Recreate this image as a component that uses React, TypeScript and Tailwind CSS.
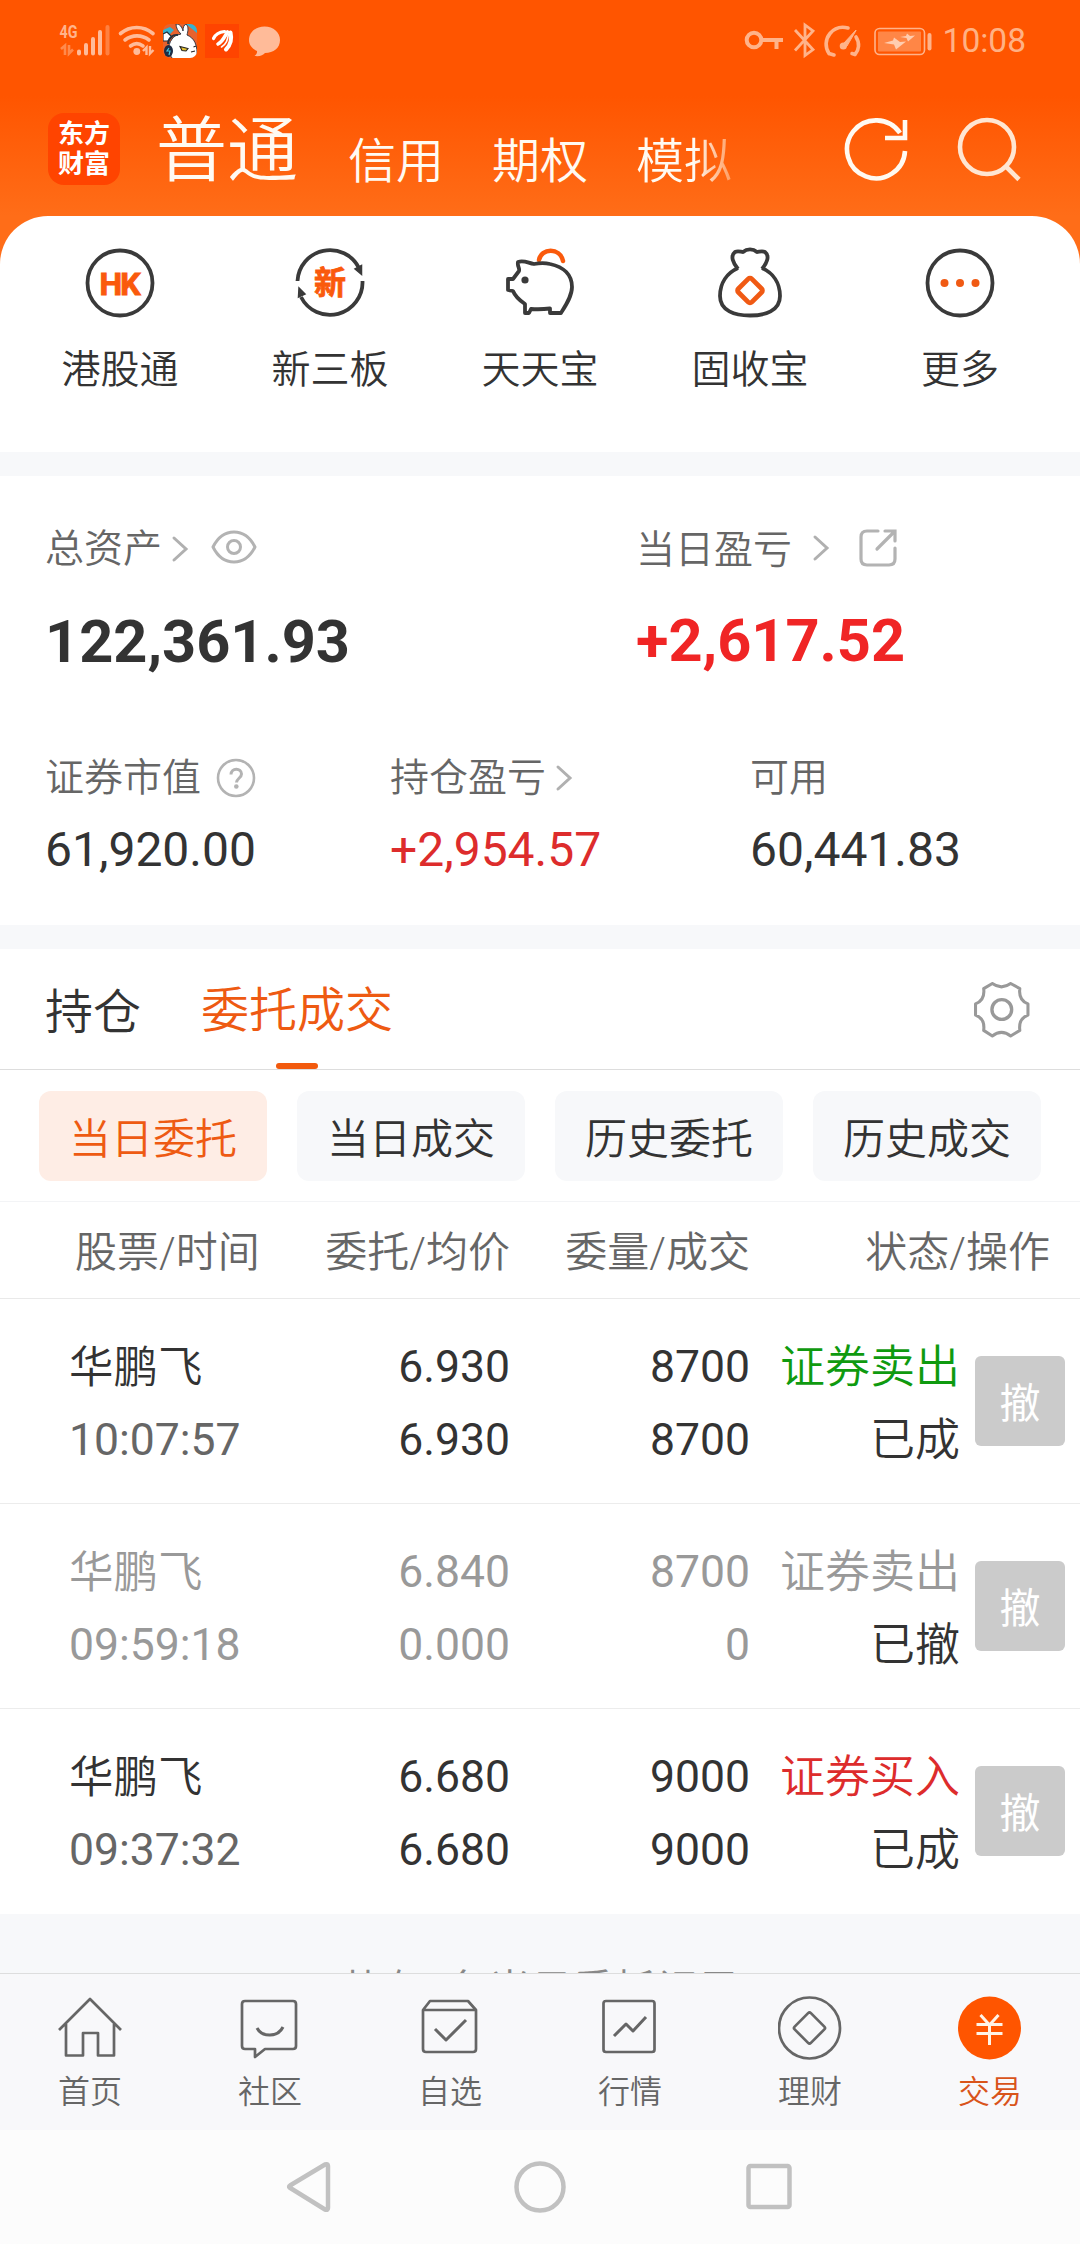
import React, { useState } from 'react';

interface Order {
  name: string;
  time: string;
  price: string;
  avgPrice: string;
  amount: string;
  filled: string;
  side: string;
  sideColor: string;
  status: string;
  cancelled?: boolean;
}

const orders: Order[] = [
  {
    name: '华鹏飞',
    time: '10:07:57',
    price: '6.930',
    avgPrice: '6.930',
    amount: '8700',
    filled: '8700',
    side: '证券卖出',
    sideColor: 'text-[#0f9a0f]',
    status: '已成',
  },
  {
    name: '华鹏飞',
    time: '09:59:18',
    price: '6.840',
    avgPrice: '0.000',
    amount: '8700',
    filled: '0',
    side: '证券卖出',
    sideColor: 'text-[#999999]',
    status: '已撤',
    cancelled: true,
  },
  {
    name: '华鹏飞',
    time: '09:37:32',
    price: '6.680',
    avgPrice: '6.680',
    amount: '9000',
    filled: '9000',
    side: '证券买入',
    sideColor: 'text-[#dd2c2c]',
    status: '已成',
  },
];

const filters = ['当日委托', '当日成交', '历史委托', '历史成交'];

const StatusBar = () => (
  <div className="flex h-[82px] items-center justify-between pl-[56px] pr-[54px]">
    {/* Signal, wifi and notification icons */}
    <svg width="230" height="40" viewBox="56 21 230 40" fill="none">
      <text x="59.5" y="38" fontSize="18" fontWeight="700" fill="#ffb48c" textLength="18" lengthAdjust="spacingAndGlyphs">
        4G
      </text>
      <g stroke="#ff8a4d" strokeWidth="2.6">
        <path d="M61 49l4-3.5V55M73 49.500l-4 4V45" />
      </g>
      <g stroke="#ffbb99" strokeWidth="4" strokeLinecap="round">
        <path d="M79 51.500v2M86 45v8.500M93 39v14.500M100 32v21.500" />
        <path d="M107.500 27v26.500" stroke="#ff8040" />
      </g>
      <g stroke="#ffbb99" strokeWidth="3.6" strokeLinecap="round">
        <path d="M120.500 33.500c9.500-8 23-8 32.500 0M125 40c7-5.500 17-5.500 24 0M130.500 46c4-3 8.500-3 12.500 0" />
      </g>
      <circle cx="136.800" cy="51.500" r="3.400" fill="#ffbb99" />
      <path d="M143 51l3.500-3.500V55M153.500 50l-3.500 3.500V46" stroke="#ffbb99" strokeWidth="2.400" />

      {/* Rabbit with headphones */}
      <clipPath id="rabbit">
        <rect x="163" y="24" width="34" height="34" rx="7" />
      </clipPath>
      <g clipPath="url(#rabbit)">
        <rect x="163" y="24" width="34" height="34" fill="#e8622e" />
        <path d="M163 30l7-3 4 3-6 6h-5zM186 24h11v9z" fill="#35b3cf" />
        <path d="M163 34l4-2 5 5-4 4h-5z" fill="#fff" stroke="#26303c" strokeWidth="1.200" />
        <path
          d="M181 34c-3-3-5-6-5-10 4 0 6 3 7 7 0-4 1-6 3-7 3 3 2 7 1 11 7 3 11 9 10 24h-24c-5-5-6-13-1-20 2-3 5-4 9-5z"
          fill="#fff"
          stroke="#26303c"
          strokeWidth="0.900"
        />
        <path d="M168 44c0-6 5-10 10-9" stroke="#26303c" strokeWidth="1.800" />
        <ellipse cx="168.500" cy="51" rx="4.500" ry="6" fill="#1d2c44" />
        <path d="M169 48l-2 3h3l-1 4" stroke="#45c3dd" strokeWidth="1.200" />
        <path d="M180 46.500l8 2-2 2.500-4-.5z" fill="#e2c02f" stroke="#222" strokeWidth="1.100" />
        <path d="M193.500 47l2.500-1M191 52l4-1" stroke="#222" strokeWidth="1.200" />
      </g>

      <rect x="205" y="24" width="34" height="34" fill="#ff4400" />
      {/* Three feathers of the broker logo */}
      <g stroke="#fff" strokeLinecap="round">
        <path d="M213.500 38.500c2-4.500 6-6.500 11-7" strokeWidth="3.200" />
        <path d="M218 44c5-2.500 6.500-7.500 9.500-12" strokeWidth="3.600" />
        <path d="M226 49.500c5-5 6-11 4.500-17" strokeWidth="4" />
        <path d="M221.500 47c5-3 6-7 7-13" strokeWidth="1.600" />
      </g>
      <path
        d="M264.500 26.500c9 0 15.500 6 15.500 13.500 0 8-6.500 13-15 13-2 2.500-5 3.500-10.500 3 2-1.500 2.800-3.500 2.500-5-5-2.500-8-6-8-11 0-7.500 6.500-13.500 15.500-13.500z"
        fill="#ffbb99"
      />
    </svg>

    <div className="flex items-center gap-[9px]">
      <svg width="190" height="40" viewBox="744 21 190 40" fill="none" stroke="#ffb38a">
        <g strokeWidth="4">
          <circle cx="754" cy="40" r="7.300" />
          <path d="M762 40h21M776.500 40v9" />
        </g>
        <path d="M795 30l18 19.500-8 6V25l8 6-18 19.500" strokeWidth="2.800" />
        <g strokeWidth="3.600" strokeLinecap="round">
          <path d="M829 53.500c-4-6-4-14 1-20 5-6 12-7 18-5.500M856 37c4 6 3 13-1 17.500M829 53.500l5 1.500M855 54.500l-3-1" />
        </g>
        <path d="M856 30l-12 13-1 5 4-2 9-15.500z" fill="#ffb38a" strokeWidth="1" />
        <circle cx="843.300" cy="46" r="3.600" fill="#ffb38a" stroke="none" />
        <rect x="875" y="28.500" width="49.500" height="26" rx="4.500" strokeWidth="1.600" />
        <rect x="878" y="31.500" width="43" height="20" rx="1" fill="#ff8646" stroke="none" />
        <path d="M884 43l9-2.500 1-3 6 4.500 6-.5-10 8-2-5zM900 37l6-1 1-2.500 3 2.500 5-.5-7 6-1.500-3.500z" fill="#ffcdb0" stroke="none" />
        <path d="M929.500 35v13.500" strokeWidth="4" strokeLinecap="round" />
      </svg>
      <span className="text-[33.5px] leading-10 text-[#ffb184]">10:08</span>
    </div>
  </div>
);

const HeaderTabs = () => (
  <div className="flex h-[134px] items-center pl-12 pr-[58px] text-[#fffaf2]">
    <div className="flex size-[72px] flex-col items-center justify-center rounded-2xl bg-[#ff4400] text-[26px] leading-[30px] font-bold text-white">
      <span>东方</span>
      <span>财富</span>
    </div>
    <div className="ml-[36px] flex flex-1 items-center gap-12 text-[48px] leading-[72px] font-[350]">
      <span className="pt-1 pr-[2px] text-[71px]">普通</span>
      <span className="pt-[26px]">信用</span>
      <span className="pt-[26px]">期权</span>
      <span className="bg-linear-to-r from-[#fffaf2] from-60% to-[#ff9a5c] bg-clip-text pt-[26px] text-transparent">模拟</span>
    </div>
    <svg width="64" height="64" viewBox="0 0 64 64" fill="none" stroke="currentColor" strokeWidth="4.600" className="mr-[48px]">
      <path d="M61 34A29 29 0 1 1 56 16M61 3v18H41" />
    </svg>
    <svg width="66" height="66" viewBox="0 0 66 66" fill="none" stroke="#ffe6d2" strokeWidth="4.600">
      <circle cx="31" cy="31" r="27" />
      <path d="M49.500 50L63 63.500" />
    </svg>
  </div>
);

const shortcuts = [
  {
    label: '港股通',
    icon: (
      <>
        <circle cx="36" cy="36" r="32.500" />
        <text x="36" y="47.500" fontSize="32" fontWeight="700" fill="#fa5a0c" stroke="#fa5a0c" strokeWidth="1" textAnchor="middle" textLength="41">
          HK
        </text>
      </>
    ),
  },
  {
    label: '新三板',
    icon: (
      <>
        <path d="M3.500 34A32.500 32.500 0 0 1 65 21M68.500 34A32.500 32.500 0 0 1 7 50" />
        <path d="M61 22l6.500-3.500v9zM4.500 50l.5-9 6 6z" fill="#3a3a3a" strokeWidth="1.500" />
        <text x="36" y="46.500" fontSize="32" fontWeight="700" fill="#fa5a0c" stroke="#fa5a0c" strokeWidth="0.800" textAnchor="middle">
          新
        </text>
      </>
    ),
  },
  {
    label: '天天宝',
    icon: (
      <>
        <path d="M35 13c2-12 21-13 24 1" stroke="#fa5a0c" strokeWidth="4.500" strokeLinecap="round" />
        <path
          d="M14 15c6-2 10 1 16 2 5-1 10-1.500 16 0 14 3 22 11 22 23 0 9-6 18-11 26H46v-4.500c-8 1-12 1-19 .5l-2 4H21v-9C15 53 11 49 9 44l-5-1V32h5l6-8c1-3-2-5-1-9z"
          strokeLinejoin="round"
        />
        <circle cx="21" cy="33" r="3.600" fill="#3a3a3a" stroke="none" />
      </>
    ),
  },
  {
    label: '固收宝',
    icon: (
      <>
        <path
          d="M24 22c-5-6-8-13-3-17 3-1.500 6 0 8 0 4-3.500 10-3.500 14 0 2 0 5-1.500 8 0 5 4 2 11-3 17M24 21C13 26 6 36 6 49c0 15 15 19.500 30 19.500S66 64 66 49C66 36 59 26 48 21"
          strokeLinejoin="round"
        />
        <rect x="26.500" y="34" width="19" height="19" rx="2.500" transform="rotate(45 36 43.500)" stroke="#f05a14" strokeWidth="4.800" />
      </>
    ),
  },
  {
    label: '更多',
    icon: (
      <>
        <circle cx="36" cy="36" r="32.500" />
        <g fill="#f05a14" stroke="none">
          <circle cx="20.500" cy="36" r="4" />
          <circle cx="36" cy="36" r="4" />
          <circle cx="51.500" cy="36" r="4" />
        </g>
      </>
    ),
  },
];

const Chevron = ({ className = '' }: { className?: string }) => (
  <svg width="18" height="28" viewBox="0 0 18 28" fill="none" stroke="#b0b0b0" strokeWidth="3" strokeLinecap="round" className={className}>
    <path d="M3 3l12 11L3 25" />
  </svg>
);

const AssetSummary = () => (
  <section className="h-[449px] bg-white pt-[44px] text-[39px] leading-[56px] font-[350] text-[#666666]">
    <div className="flex">
      <div className="w-[636px] pl-[45px]">
        <div className="flex items-center">
          <span className="pt-px">总资产</span>
          <Chevron className="ml-[9px] mt-[1px]" />
          <svg width="46" height="34" viewBox="0 0 46 34" fill="none" stroke="#b3b3b3" strokeWidth="3" className="mb-[4px] ml-[22px]">
            <path d="M2 17C12-3 34-3 44 17 34 37 12 37 2 17z" strokeLinejoin="round" />
            <circle cx="23" cy="17" r="6.500" />
          </svg>
        </div>
        <div className="mt-[29px] text-[59.5px] leading-[72px] font-bold text-[#333333]">122,361.93</div>
      </div>
      <div>
        <div className="flex items-center">
          <span className="pt-[2px]">当日盈亏</span>
          <Chevron className="mb-[2px] ml-[20px]" />
          <svg width="40" height="40" viewBox="0 0 40 40" fill="none" stroke="#b3b3b3" strokeWidth="3.200" strokeLinecap="round" className="mb-[2px] ml-[28px]">
            <path d="M20 3H9Q3 3 3 9v22q0 6 6 6h22q6 0 6-6V20M19 21L36 4M27 3h10v10" />
          </svg>
        </div>
        <div className="mt-[27px] text-[59.5px] leading-[72px] font-bold text-[#f02525]">+2,617.52</div>
      </div>
    </div>

    <div className="mt-[71px] flex">
      <div className="w-[390px] pl-[45px]">
        <div className="flex items-center">
          <span className="pt-px">证券市值</span>
          <svg width="40" height="40" viewBox="0 0 40 40" fill="none" stroke="#b3b3b3" strokeWidth="2.600" className="ml-[15px]">
            <circle cx="20" cy="20" r="18" />
            <path d="M15 16.500c0-7 10.500-7 10.500-.5 0 4-5 4.500-5 8.500" strokeWidth="3" />
            <circle cx="20.300" cy="28.500" r="2.300" fill="#b3b3b3" stroke="none" />
          </svg>
        </div>
        <div className="mt-[16px] text-[48px] font-normal text-[#333333]">61,920.00</div>
      </div>
      <div className="w-[360px]">
        <div className="flex items-center">
          <span className="pt-px">持仓盈亏</span>
          <Chevron className="ml-[9px]" />
        </div>
        <div className="mt-[16px] text-[48px] font-normal text-[#dd2c2c]">+2,954.57</div>
      </div>
      <div>
        <div className="pt-px">可用</div>
        <div className="mt-[16px] text-[48px] font-normal text-[#333333]">60,441.83</div>
      </div>
    </div>
  </section>
);

const OrderRow: React.FC<{ order: Order; last: boolean }> = ({ order, last }) => (
  <div
    className={`grid h-[205px] grid-cols-[300px_210px_240px_210px_120px] items-center border-b text-[44.5px] leading-[73px] font-[350] ${last ? 'border-white' : 'border-[#ececec]'} ${order.cancelled ? 'text-[#999999]' : 'text-[#333333]'}`}
  >
    <div className="pt-1.5 pl-[69px]">
      <div className="pt-[2px] leading-[71px]">{order.name}</div>
      <div className={`font-normal ${order.cancelled ? 'text-[#999999]' : 'text-[#666666]'}`}>{order.time}</div>
    </div>
    <div className="pt-1.5 text-right font-normal">
      <div>{order.price}</div>
      <div>{order.avgPrice}</div>
    </div>
    <div className="pt-1.5 text-right font-normal">
      <div>{order.amount}</div>
      <div>{order.filled}</div>
    </div>
    <div className="pt-1.5 text-right text-[45px]">
      <div className={order.sideColor}>{order.side}</div>
      <div className="text-[#333333]">{order.status}</div>
    </div>
    <button className="mx-auto flex size-[90px] items-center justify-center rounded-md bg-[#cbcbcb] pt-[6px] text-[41px] font-normal text-white">
      撤
    </button>
  </div>
);

const navItems = [
  {
    label: '首页',
    icon: <path d="M1 34L32 3l31 31M8 28v31.500h17V37h15v22.500h16V28" />,
  },
  {
    label: '社区',
    icon: (
      <>
        <path d="M7 5h48q3 0 3 3v42q0 3-3 3H27l-10 8v-8H7q-3 0-3-3V8q0-3 3-3z" />
        <path d="M19 32c5 9.500 21 9.500 26-1" strokeWidth="3" />
      </>
    ),
  },
  {
    label: '自选',
    icon: (
      <>
        <path d="M5 14l7-9h38l8 9v39q0 3-3 3H8q-3 0-3-3zM5 14h53" />
        <path d="M17 33l11 11 20-20" strokeWidth="3" />
      </>
    ),
  },
  {
    label: '行情',
    icon: (
      <>
        <rect x="5.500" y="5" width="51" height="51" rx="2.500" />
        <path d="M16 40l12-12 7 7 13-14" strokeWidth="3" />
      </>
    ),
  },
  {
    label: '理财',
    icon: (
      <>
        <circle cx="31.500" cy="32" r="30.500" />
        <rect x="20" y="20.500" width="23" height="23" rx="2" transform="rotate(45 31.5 32)" />
      </>
    ),
  },
  {
    label: '交易',
    icon: (
      <>
        <circle cx="31.500" cy="32" r="31.500" fill="#ff5500" stroke="none" />
        <path d="M22.500 19l9 10 9-10M31.500 29v20M18.500 28.500h26M18.500 37.500h26" stroke="#fff3e6" strokeWidth="3" />
      </>
    ),
  },
];

export default function App() {
  const [filter, setFilter] = useState(0);

  return (
    <div className="flex h-[2244px] w-[1080px] flex-col overflow-hidden bg-white font-['Roboto','Noto_Sans_CJK_SC',sans-serif]">
      {/* Header */}
      <div className="h-[452px] shrink-0 bg-[linear-gradient(180deg,#ff5500_0px,#ff5500_96px,#ff6d18_216px,#ff6d18_270px)]">
        <StatusBar />
        <HeaderTabs />
        <div className="grid h-[236px] grid-cols-5 rounded-t-[48px] bg-white px-[15px] pt-[31px]">
          {shortcuts.map((item) => (
            <div key={item.label} className="flex flex-col items-center">
              <svg width="72" height="72" viewBox="0 0 72 72" fill="none" stroke="#3a3a3a" strokeWidth="3.800">
                {item.icon}
              </svg>
              <span className="mt-[23px] text-[39px] leading-[56px] font-[350] text-[#333333]">{item.label}</span>
            </div>
          ))}
        </div>
      </div>
      <div className="h-6 shrink-0 bg-[#f7f8fa]" />

      <AssetSummary />
      <div className="h-6 shrink-0 bg-[#f7f8fa]" />

      {/* Section tabs */}
      <div className="flex h-[121px] shrink-0 border-b border-[#dddddd] pl-[45px] pr-[50px] text-[48px] font-[350]">
        <span className="pt-[4px] leading-[119px] text-[#333333]">持仓</span>
        <div className="ml-[60px] flex flex-col items-center text-[#ee5a12]">
          <span className="pt-[4px] leading-[116px]">委托成交</span>
          <span className="-mt-1.5 h-1.5 w-[42px] shrink-0 rounded-full bg-[#f25a0e]" />
        </div>
        <svg width="56" height="56" viewBox="0 0 55 55" fill="none" stroke="#999999" strokeWidth="3" strokeLinejoin="round" className="mt-[33px] ml-auto">
          <path d="M18 1.500Q27 8 36 1.500L45 6.500Q43.500 18 53 21.500V32.500Q43.500 36 45 47.500L36 53Q27 46 18 53L9.500 47.500Q11 36 1.500 32.500V21.500Q11 18 9.500 6.500z" />
          <circle cx="27.300" cy="27" r="9.700" strokeWidth="3.300" />
        </svg>
      </div>

      <div className="flex h-[132px] shrink-0 gap-[30px] border-b border-[#f3f4f6] px-[39px] pt-[21px]">
        {filters.map((label, i) => (
          <button
            key={label}
            onClick={() => setFilter(i)}
            className={`h-[90px] w-[228px] rounded-xl pt-[6px] text-[42px] font-[350] ${filter === i ? 'bg-[#feede5] text-[#ee5a12]' : 'bg-[#f7f8fa] text-[#333333]'}`}
          >
            {label}
          </button>
        ))}
      </div>

      {/* Order table */}
      <div className="grid h-[97px] shrink-0 grid-cols-[300px_210px_240px_330px] items-center border-b border-[#e9e9e9] pt-[5px] text-right text-[42px] font-[350] text-[#666666]">
        <span className="pl-[75px] text-left">股票/时间</span>
        <span>委托/均价</span>
        <span>委量/成交</span>
        <span className="pr-[30px]">状态/操作</span>
      </div>
      <div className="shrink-0">
        {orders.map((order, i) => (
          <OrderRow key={order.time} order={order} last={i === orders.length - 1} />
        ))}
      </div>
      <div className="h-[59px] shrink-0 overflow-hidden bg-[#f7f8fa] pt-[56px] text-center text-[42px] leading-[42px] font-[350] text-[#888888]">
        共有3条当日委托记录
      </div>

      {/* Bottom navigation */}
      <nav className="grid h-[157px] shrink-0 grid-cols-6 border-t border-[#dddddd] bg-[#f8f8fa] pt-[22px]">
        {navItems.map((item, i) => (
          <div key={item.label} className="flex flex-col items-center">
            <svg width="64" height="64" viewBox="0 0 64 64" fill="none" stroke="#666666" strokeWidth="2.700" strokeLinejoin="round">
              {item.icon}
            </svg>
            <span
              className={`mt-[12px] text-[32px] leading-[40px] font-[350] ${i === navItems.length - 1 ? 'text-[#d9541a]' : 'text-[#666666]'}`}
            >
              {item.label}
            </span>
          </div>
        ))}
      </nav>

      {/* System keys */}
      <div className="flex h-[114px] shrink-0 items-center justify-center bg-[#fcfcfc]">
        <svg width="520" height="52" viewBox="280 0 520 52" fill="none" stroke="#c1c1c1" strokeWidth="4.500" strokeLinejoin="round">
          <path d="M289.500 26.500q-1-1 .5-2L325 3.500q3-1 3 1.500v42q0 2.500-3 1.500z" />
          <circle cx="540" cy="26" r="23.500" />
          <rect x="748.500" y="5" width="41" height="41" rx="2" />
        </svg>
      </div>
    </div>
  );
}
